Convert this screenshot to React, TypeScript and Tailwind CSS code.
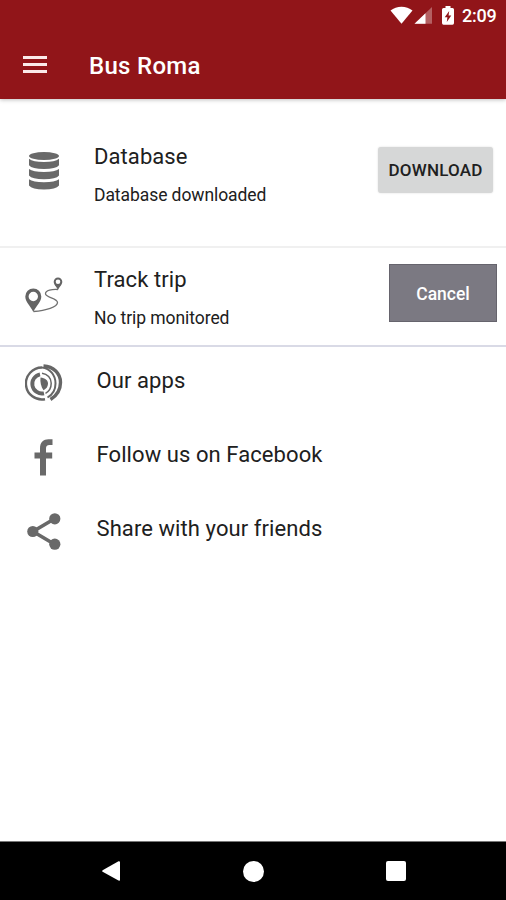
import React from "react";

function StatusBar() {
  return (
    <div className="flex h-8 items-start pl-[390px] text-white">
      <svg className="mt-[6px] h-[18px] w-[23px] shrink-0" viewBox="0 0 23 18" fill="#fff">
        <path d="M0.5 4.5C6.5-.6 16.500-.6 22.500 4.500L11.500 17.800Z" />
      </svg>
      <svg className="mt-[7px] ml-[1px] h-[17px] w-[19px] shrink-0" viewBox="0 0 19 17">
        <path d="M0.500 16.800L18 0V16.800Z" fill="#fff" fillOpacity=".32" />
        <path d="M0.500 16.800L11.500 6.200V16.800Z" fill="#fff" />
      </svg>
      <svg className="mt-[6px] ml-[9px] h-[19px] w-[12px] shrink-0" viewBox="0 0 12 19">
        <path d="M3.500 0H8.500V2H10.500Q12 2 12 3.500V17Q12 18.700 10.500 18.700H1.500Q0 18.700 0 17V3.500Q0 2 1.500 2H3.500Z" fill="#fff" />
        <path d="M7.200 5L2.700 11.200H5.400L4.800 16L9.300 9.600H6.600Z" fill="#911519" />
      </svg>
      <span className="mt-[6px] ml-[8px] text-[18px] leading-[20px] font-medium tracking-[-0.2px]">2:09</span>
    </div>
  );
}

function DatabaseIcon() {
  return (
    <svg className="h-[38px] w-[32px]" viewBox="0 0 32 38" fill="#696969">
      <ellipse cx="16" cy="4" rx="15" ry="4" />
      <path d="M1 6.800Q5 10 16 10T31 6.800V13.200Q28 17 16 17T1 13.200Z" />
      <path d="M1 17Q5 20 16 20T31 17V23.400Q28 27.200 16 27.200T1 23.400Z" />
      <path d="M1 27.200Q5 30.200 16 30.200T31 27.200V33.500Q28 37.500 16 37.500T1 33.500Z" />
    </svg>
  );
}

function RouteIcon() {
  return (
    <svg className="h-[36px] w-[38px]" viewBox="0 0 38 36">
      <path fillRule="evenodd" fill="#646464" d="M8.300 11.500A8 8 0 0 0 .3 19.500C.3 25 5 28 8.300 35C11.600 28 16.300 25 16.300 19.500A8 8 0 0 0 8.300 11.500ZM8.300 14.800A4.700 4.700 0 1 1 8.300 24.200A4.700 4.700 0 1 1 8.300 14.800Z" />
      <path fillRule="evenodd" fill="#646464" d="M33 .5A4.300 4.300 0 0 0 28.700 4.800C28.700 7.800 31.300 9.500 33 13C34.700 9.500 37.300 7.800 37.300 4.800A4.300 4.300 0 0 0 33 .5ZM33 2.500A2.300 2.300 0 1 1 33 7.100A2.300 2.300 0 1 1 33 2.500Z" />
      <path d="M33 12.500C27 12 20.500 13.500 20.500 16.800C20.500 20.500 32.500 21.500 32.500 25.500C32.500 30 21 33.500 8.500 34.500" fill="none" stroke="#707070" strokeWidth="1.300" />
    </svg>
  );
}

function AppsIcon() {
  return (
    <svg className="h-[38px] w-[38px]" viewBox="0 0 38 38" fill="none" stroke="#666">
      <path d="M17 3.500A16 16 0 1 0 20 35.200" strokeWidth="2.400" />
      <path d="M17 3.500C25 4.500 30.500 11 30.500 19.500C30.500 26 27 31 22.500 33.500" strokeWidth="2" />
      <path d="M18.500 2C28.500 2.500 35.500 9.500 35.500 18.500C35.500 26 32 31.500 25.500 35.500" strokeWidth="3.400" />
      <path d="M15 10.300A9.600 9.600 0 0 0 19 29.300" strokeWidth="3.800" />
      <path d="M17 9.200C22.500 10 26.200 14 26.200 19.300C26.200 24 24 27.500 20.500 29.300" strokeWidth="1.500" />
      <path d="M15.500 13.500C20 14 23 16.200 23 19.800C23 22.800 21 25 18.500 26.300C16 23 15 18 15.500 13.500Z" fill="#666" stroke="none" />
    </svg>
  );
}

function FacebookIcon() {
  return (
    <svg className="h-[37px] w-[20px]" viewBox="0 0 20 37" fill="#696969">
      <path d="M6 36.500V19.500H.5V13.500H6V9.500C6 3 9.500.3 14.500.3H18.500V6H15.500C12.800 6 12 7.200 12 9.500V13.500H18.200V19.500H12V36.500Z" />
    </svg>
  );
}

function ShareIcon() {
  return (
    <svg className="h-[37px] w-[34px]" viewBox="0 0 34 37" fill="#696969">
      <path d="M27.500 5.700L6 18.500L27.500 31.300" fill="none" stroke="#696969" strokeWidth="3.600" />
      <circle cx="27.800" cy="5.800" r="5.600" />
      <circle cx="5.800" cy="18.500" r="5.600" />
      <circle cx="27.800" cy="31.200" r="5.600" />
    </svg>
  );
}

function MenuRow({ icon, label }: { icon: React.ReactNode; label: string }) {
  return (
    <li className="flex h-[74px] items-center">
      <div className="flex w-[87px] shrink-0 items-center justify-center">{icon}</div>
      <span className="-mt-[5px] pl-[9.500px] text-[22px] leading-[28px] tracking-[0.080px]">{label}</span>
    </li>
  );
}

export default function App() {
  return (
    <div className="flex h-[900px] w-[506px] flex-col overflow-hidden bg-white font-[Roboto,sans-serif] text-[#202020]">
      <header className="h-[99px] shrink-0 bg-[#911519] shadow-[0_1px_4px_rgba(0,0,0,0.25)]">
        <StatusBar />
        <div className="flex h-[67px] items-center pl-[23px] text-white">
          <button className="-mt-[2px] flex w-[24px] flex-col gap-[4px]" aria-label="Menu">
            <span className="h-[3px] bg-[#fbe9e9]" />
            <span className="h-[3px] bg-[#fbe9e9]" />
            <span className="h-[3px] bg-[#fbe9e9]" />
          </button>
          <h1 className="pl-[42px] text-[24px] leading-[30px] font-medium tracking-[0.300px]">Bus Roma</h1>
        </div>
      </header>

      <section className="flex h-[149px] shrink-0 items-start border-b-2 border-[#f0f0f0]">
        <div className="flex w-[87px] justify-center pt-[53px]"><DatabaseIcon /></div>
        <div className="flex-1 pt-[44px] pl-[7px]">
          <h2 className="text-[22px] leading-[28px] tracking-[0.080px]">Database</h2>
          <p className="mt-[13px] text-[17.500px] leading-[22px] tracking-[-0.070px]">Database downloaded</p>
        </div>
        <button className="mt-[48px] mr-[13px] h-[46px] w-[115px] rounded-[3px] bg-[#d6d7d7] pt-[2px] text-[17px] font-medium tracking-[0.200px] shadow-[0_0_2px_rgba(0,0,0,0.15)]">DOWNLOAD</button>
      </section>

      <section className="flex h-[99px] shrink-0 items-start border-b-2 border-[#d9dae6]">
        <div className="flex w-[87px] justify-center pt-[29px]"><RouteIcon /></div>
        <div className="flex-1 pt-[18px] pl-[7px]">
          <h2 className="text-[22px] leading-[28px] tracking-[0.080px]">Track trip</h2>
          <p className="mt-[13px] text-[17.500px] leading-[22px] tracking-[-0.070px]">No trip monitored</p>
        </div>
        <button className="mt-[16px] mr-[9px] h-[58px] w-[108px] border border-[#66646d] bg-[#7b7982] pt-[2px] text-[17.500px] font-medium text-white">Cancel</button>
      </section>

      <ul className="-mt-[1px] flex-1">
        <MenuRow icon={<AppsIcon />} label="Our apps" />
        <MenuRow icon={<FacebookIcon />} label="Follow us on Facebook" />
        <MenuRow icon={<ShareIcon />} label="Share with your friends" />
      </ul>

      <nav className="flex h-[59px] shrink-0 items-center border-t border-[#777] bg-black pl-[102px]">
        <svg className="h-[20px] w-[18px]" viewBox="0 0 18 20" fill="#fff"><path d="M.6 9.200L16.500.2Q18 0 18 1V19Q18 20 16.500 19.500L.6 10.800Q-.2 10 .6 9.200Z" /></svg>
        <span className="ml-[123px] h-[21px] w-[21px] rounded-full bg-white" />
        <span className="ml-[122px] h-[20px] w-[20px] rounded-[2px] bg-white" />
      </nav>
    </div>
  );
}
